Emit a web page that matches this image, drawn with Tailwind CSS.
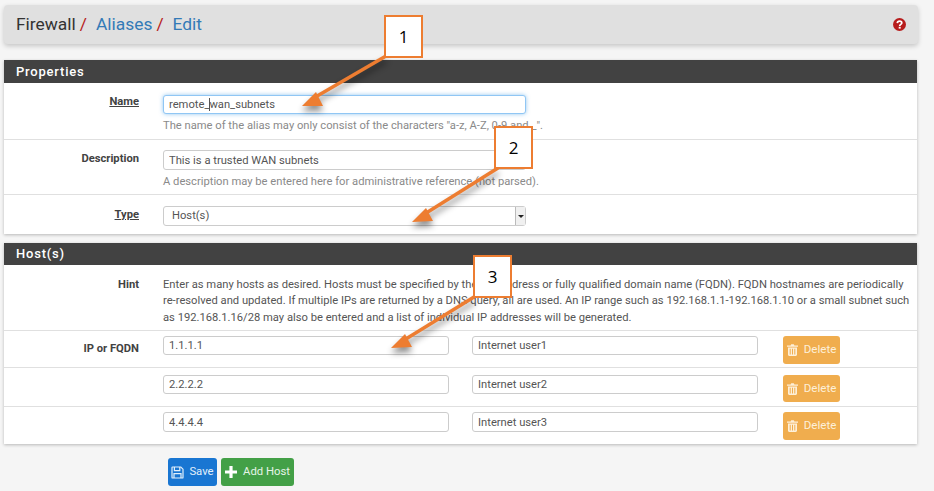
<!DOCTYPE html>
<html lang="en">
<head>
  <meta charset="UTF-8">
  <title>Firewall / Aliases / Edit</title>
  <script src="https://cdn.jsdelivr.net/npm/@tailwindcss/browser@4"></script>
</head>
<body class="bg-[#f5f5f5] font-['Roboto',sans-serif] text-[#424242] w-[934px] h-[491px] overflow-hidden relative">
  <!-- breadcrumb -->
  <div class="mt-[5px] ml-[4px] w-[914px] h-[39px] bg-[#e0e0e0] rounded-[4px] shadow-[0_2px_5px_rgba(0,0,0,0.2)] flex items-center pl-[12px] pr-[12px] text-[17.4px]">
    <span class="text-[#333]">Firewall</span>
    <span class="text-[#b71c1c] ml-[4px]">/</span>
    <a class="text-[#337ab7] ml-[9px]">Aliases</a>
    <span class="text-[#b71c1c] ml-[4px]">/</span>
    <a class="text-[#337ab7] ml-[9px]">Edit</a>
    <svg class="ml-auto" width="13" height="13" viewBox="0 0 13 13">
      <circle cx="6.5" cy="6.5" r="6.5" fill="#b71c1c"/>
      <path d="M4.3 5.1C4.4 3.8 5.3 3.1 6.6 3.1C7.9 3.1 8.8 3.9 8.8 4.9C8.8 6.3 6.7 6.4 6.7 7.9" fill="none" stroke="#fff" stroke-width="1.7"/>
      <rect x="5.7" y="8.8" width="2" height="1.8" fill="#fff"/>
    </svg>
  </div>

  <!-- properties panel -->
  <div class="mt-[16px] ml-[4px] w-[913px] bg-white shadow-[0_1px_3px_rgba(0,0,0,0.25)]">
    <div class="h-[23px] bg-[#424242] text-white text-[13px] font-medium tracking-[0.8px] pl-[12px] leading-[23px]">Properties</div>
    <div class="h-[57px] flex border-b border-[#e0e0e0]">
      <div class="w-[135px] text-right text-[11.2px] font-bold pt-[11px] shrink-0"><span class="underline">Name</span></div>
      <div class="ml-[24px] pt-[12px] relative">
        <input value="remote_wan_subnets" class="block w-[363px] h-[19px] px-[5px] text-[11.2px] text-[#555] bg-white border border-[#90c6f4] rounded-[3px] shadow-[0_0_4px_rgba(102,175,233,0.7)] outline-none">
        <span class="absolute left-[46px] top-[15px] w-px h-[13px] bg-[#555]"></span>
        <p class="text-[11.2px] text-[#8a8a8a] mt-[4px] whitespace-nowrap">The name of the alias may only consist of the characters "a-z, A-Z, 0-9 and _".</p>
      </div>
    </div>
    <div class="h-[55px] flex border-b border-[#e0e0e0]">
      <div class="w-[135px] text-right text-[11.2px] font-bold pt-[11px] shrink-0">Description</div>
      <div class="ml-[24px] pt-[10px]">
        <input value="This is a trusted WAN subnets" class="block w-[363px] h-[20px] px-[5px] text-[11.2px] text-[#555] bg-white border border-[#ccc] rounded-[3px] outline-none">
        <p class="text-[11.2px] text-[#8a8a8a] mt-[4px] whitespace-nowrap">A description may be entered here for administrative reference (not parsed).</p>
      </div>
    </div>
    <div class="h-[39px] flex">
      <div class="w-[135px] text-right text-[11.2px] font-bold pt-[12px] shrink-0"><span class="underline">Type</span></div>
      <div class="ml-[24px] pt-[11px] relative">
        <select class="block w-[363px] h-[20px] pl-[8px] text-[11.2px] text-[#555] bg-white border border-[#ccc] rounded-[3px] outline-none appearance-none">
          <option>Host(s)</option>
        </select>
        <span class="absolute right-[1px] top-[12px] w-[10px] h-[18px] bg-[#f0f0f0] border-l border-[#bbb] flex items-center justify-center">
          <span class="w-0 h-0 border-x-[3px] border-x-transparent border-t-[3px] border-t-[#222]"></span>
        </span>
      </div>
    </div>
  </div>

  <!-- hosts panel -->
  <div class="mt-[9px] ml-[4px] w-[913px] bg-white shadow-[0_1px_3px_rgba(0,0,0,0.25)]">
    <div class="h-[22px] bg-[#424242] text-white text-[13px] font-medium tracking-[0.8px] pl-[12px] leading-[22px]">Host(s)</div>
    <div class="h-[66px] flex border-b border-[#e0e0e0]">
      <div class="w-[135px] text-right text-[11.2px] font-bold pt-[12px] shrink-0">Hint</div>
      <p class="ml-[24px] pt-[12px] w-[750px] text-[11.2px] leading-[16.3px] text-[#555]">Enter as many hosts as desired. Hosts must be specified by their IP address or fully qualified domain name (FQDN). FQDN hostnames are periodically re-resolved and updated. If multiple IPs are returned by a DNS query, all are used. An IP range such as 192.168.1.1-192.168.1.10 or a small subnet such as 192.168.1.16/28 may also be entered and a list of individual IP addresses will be generated.</p>
    </div>

    <div class="h-[37px] flex border-b border-[#e0e0e0] pt-[5px]">
      <div class="w-[135px] text-right text-[11.2px] font-bold pt-[5px] shrink-0">IP or FQDN</div>
      <input value="1.1.1.1" class="ml-[24px] w-[286px] h-[19px] px-[5px] text-[11.2px] text-[#555] border border-[#ccc] rounded-[3px] outline-none">
      <input value="Internet user1" class="ml-[23px] w-[286px] h-[19px] px-[5px] text-[11.2px] text-[#555] border border-[#ccc] rounded-[3px] outline-none">
      <button class="ml-[25px] w-[57px] h-[28px] bg-[#f0ad4e] rounded-[3px] text-[#fdf0d9] text-[11.6px] flex items-center justify-center gap-[6px]">
        <svg width="11" height="12" viewBox="0 0 11 12" fill="currentColor"><path d="M3.6 1.6 4.2.3h2.6l.6 1.3H11v1.1H0V1.6ZM1 3.4h9v7.2c0 .8-.5 1.4-1.2 1.4H2.2C1.5 12 1 11.4 1 10.6Zm1.7 1.3v5.8h1V4.7Zm2.3 0v5.8h1V4.7Zm2.3 0v5.8h1V4.7Z" fill-rule="evenodd"/></svg>
        Delete
      </button>
    </div>
    <div class="h-[39px] flex border-b border-[#e0e0e0] pt-[7px]">
      <div class="w-[135px] shrink-0"></div>
      <input value="2.2.2.2" class="ml-[24px] w-[286px] h-[19px] px-[5px] text-[11.2px] text-[#555] border border-[#ccc] rounded-[3px] outline-none">
      <input value="Internet user2" class="ml-[23px] w-[286px] h-[19px] px-[5px] text-[11.2px] text-[#555] border border-[#ccc] rounded-[3px] outline-none">
      <button class="ml-[25px] w-[57px] h-[27px] bg-[#f0ad4e] rounded-[3px] text-[#fdf0d9] text-[11.6px] flex items-center justify-center gap-[6px]">
        <svg width="11" height="12" viewBox="0 0 11 12" fill="currentColor"><path d="M3.6 1.6 4.2.3h2.6l.6 1.3H11v1.1H0V1.6ZM1 3.4h9v7.2c0 .8-.5 1.4-1.2 1.4H2.2C1.5 12 1 11.4 1 10.6Zm1.7 1.3v5.8h1V4.7Zm2.3 0v5.8h1V4.7Zm2.3 0v5.8h1V4.7Z" fill-rule="evenodd"/></svg>
        Delete
      </button>
    </div>
    <div class="h-[37px] flex pt-[5px]">
      <div class="w-[135px] shrink-0"></div>
      <input value="4.4.4.4" class="ml-[24px] w-[286px] h-[20px] px-[5px] text-[11.2px] text-[#555] border border-[#ccc] rounded-[3px] outline-none">
      <input value="Internet user3" class="ml-[23px] w-[286px] h-[20px] px-[5px] text-[11.2px] text-[#555] border border-[#ccc] rounded-[3px] outline-none">
      <button class="ml-[25px] w-[57px] h-[28px] bg-[#f0ad4e] rounded-[3px] text-[#fdf0d9] text-[11.6px] flex items-center justify-center gap-[6px]">
        <svg width="11" height="12" viewBox="0 0 11 12" fill="currentColor"><path d="M3.6 1.6 4.2.3h2.6l.6 1.3H11v1.1H0V1.6ZM1 3.4h9v7.2c0 .8-.5 1.4-1.2 1.4H2.2C1.5 12 1 11.4 1 10.6Zm1.7 1.3v5.8h1V4.7Zm2.3 0v5.8h1V4.7Zm2.3 0v5.8h1V4.7Z" fill-rule="evenodd"/></svg>
        Delete
      </button>
    </div>
  </div>

  <!-- actions -->
  <div class="mt-[14px] ml-[168px] flex gap-[4px]">
    <button class="w-[49px] h-[28px] bg-[#1976d2] rounded-[3px] text-[#e3f0fb] text-[11.3px] flex items-center justify-center gap-[5px]">
      <svg width="13" height="13" viewBox="0 0 13 13" fill="none" stroke="currentColor" stroke-width="1.2"><path d="M1 1.6c0-.3.3-.6.6-.6h8.2L12 3.2v8.2c0 .3-.3.6-.6.6H1.6c-.3 0-.6-.3-.6-.6Z"/><path d="M3.4 1v3.6h5.4V1M3 12V7.6h7V12"/></svg>
      Save
    </button>
    <button class="w-[73px] h-[28px] bg-[#43a047] rounded-[3px] text-[#e6f4e7] text-[11.3px] flex items-center justify-center gap-[6px]">
      <svg width="12" height="12" viewBox="0 0 12 12" fill="#fff"><path d="M4.4 0h3.2v4.4H12v3.2H7.6V12H4.4V7.6H0V4.4h4.4Z"/></svg>
      Add Host
    </button>
  </div>

  <!-- annotation arrows, on top of the form -->
  <svg class="absolute left-0 top-0 pointer-events-none drop-shadow-[0_5px_3px_rgba(0,0,0,0.45)]" width="934" height="491" viewBox="0 0 934 491">
    <g fill="none" stroke="#ed7d31" stroke-width="3.5">
      <path d="M386 56 312 99"/>
      <path d="M498 168 423 215"/>
      <path d="M474 297 401 342"/>
    </g>
    <g fill="#ed7d31">
      <path d="M302 106 316 92 323 106Z"/>
      <path d="M412 222 426 208 433 221Z"/>
      <path d="M391 348 405 334 412 347Z"/>
    </g>
  </svg>
  <div class="absolute left-[384px] top-[15px] w-[39px] h-[43px] bg-white border-2 border-[#ed7d31] flex items-center justify-center font-['Open_Sans',sans-serif] text-[17px] text-black">1</div>
  <div class="absolute left-[494px] top-[126px] w-[39px] h-[43px] bg-white border-2 border-[#ed7d31] flex items-center justify-center font-['Open_Sans',sans-serif] text-[17px] text-black">2</div>
  <div class="absolute left-[473px] top-[255px] w-[39px] h-[43px] bg-white border-2 border-[#ed7d31] flex items-center justify-center font-['Open_Sans',sans-serif] text-[17px] text-black">3</div>
</body>
</html>
